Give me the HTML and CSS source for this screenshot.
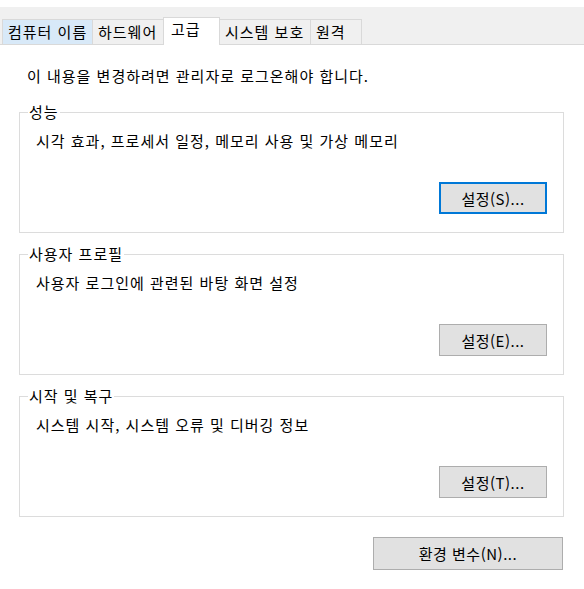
FILE: index.html
```html
<!DOCTYPE html>
<html lang="ko">
<head>
<meta charset="utf-8">
<link rel="stylesheet" href="styles.css">
</head>
<body>
<div class="window">
  <div class="tabbar">
    <div class="tab tab-hover tab-w1">컴퓨터 이름</div>
    <div class="tab tab-w2">하드웨어</div>
    <div class="tab tab-active">고급</div>
    <div class="tab tab-w4">시스템 보호</div>
    <div class="tab tab-last">원격</div>
  </div>
  <div class="panel">
    <p class="intro">이 내용을 변경하려면 관리자로 로그온해야 합니다.</p>
    <fieldset class="group">
      <legend class="group-title">성능</legend>
      <p class="group-desc">시각 효과, 프로세서 일정, 메모리 사용 및 가상 메모리</p>
      <button class="btn btn-focus" type="button">설정(S)...</button>
    </fieldset>
    <fieldset class="group">
      <legend class="group-title">사용자 프로필</legend>
      <p class="group-desc">사용자 로그인에 관련된 바탕 화면 설정</p>
      <button class="btn" type="button">설정(E)...</button>
    </fieldset>
    <fieldset class="group">
      <legend class="group-title">시작 및 복구</legend>
      <p class="group-desc">시스템 시작, 시스템 오류 및 디버깅 정보</p>
      <button class="btn" type="button">설정(T)...</button>
    </fieldset>
    <div class="footer">
      <button class="btn btn-wide" type="button">환경 변수(N)...</button>
    </div>
  </div>
</div>
</body>
</html>
```

FILE: styles.css
```css
* { box-sizing: border-box; }
html, body {
  margin: 0;
  padding: 0;
  background: #ffffff;
}
body {
  font-family: "Noto Sans CJK KR", "Noto Sans", sans-serif;
  font-size: 15px;
  letter-spacing: 1px;
  color: #000000;
  width: 584px;
  height: 589px;
  overflow: hidden;
}
.window {
  padding-top: 7px;
}
.tabbar {
  background: #f0f0f0;
  height: 37px;
  display: flex;
  align-items: flex-end;
  padding-left: 2px;
}
.tab {
  height: 25px;
  border: 1px solid #d9d9d9;
  border-right: none;
  border-bottom: none;
  line-height: 23px;
  padding-left: 5px;
  white-space: nowrap;
  background: #f0f0f0;
}
.tab-w1 { width: 90px; }
.tab-w2 { width: 71px; }
.tab-w4 { width: 90px; }
.tab-hover {
  background: #d8e9f8;
}
.tab-active {
  width: 57px;
  height: 28px;
  background: #ffffff;
  line-height: 22px;
  padding-left: 7px;
  margin-bottom: -1px;
  border-right: 1px solid #d9d9d9;
  position: relative;
  z-index: 1;
}
.tab-active + .tab {
  border-left: none;
}
.tab-last {
  width: 52px;
  border-right: 1px solid #d9d9d9;
}
.panel {
  border-top: 1px solid #d9d9d9;
  padding-top: 21px;
}
.intro {
  margin: 0 0 16px 27px;
  line-height: 20px;
}
.group {
  margin: 0 20px 11px 19px;
  border: 1px solid #dcdcdc;
  padding: 0 16px 18px 16px;
  display: flex;
  flex-direction: column;
}
.group-title {
  padding: 0 1px;
  margin-left: -8px;
  line-height: 20px;
}
.group-desc {
  margin: 9px 0 31px 0;
  line-height: 20px;
}
.btn {
  align-self: flex-end;
  width: 108px;
  height: 32px;
  background: #e1e1e1;
  border: 1px solid #adadad;
  font-family: inherit;
  font-size: 15px;
  letter-spacing: 0.5px;
  color: #000000;
  padding: 0;
  margin: 0;
  border-radius: 0;
}
.btn-focus {
  border: 2px solid #0078d7;
}
.footer {
  display: flex;
  justify-content: flex-end;
  padding-right: 21px;
  margin-top: 20px;
}
.btn-wide {
  width: 190px;
  height: 33px;
}
```
